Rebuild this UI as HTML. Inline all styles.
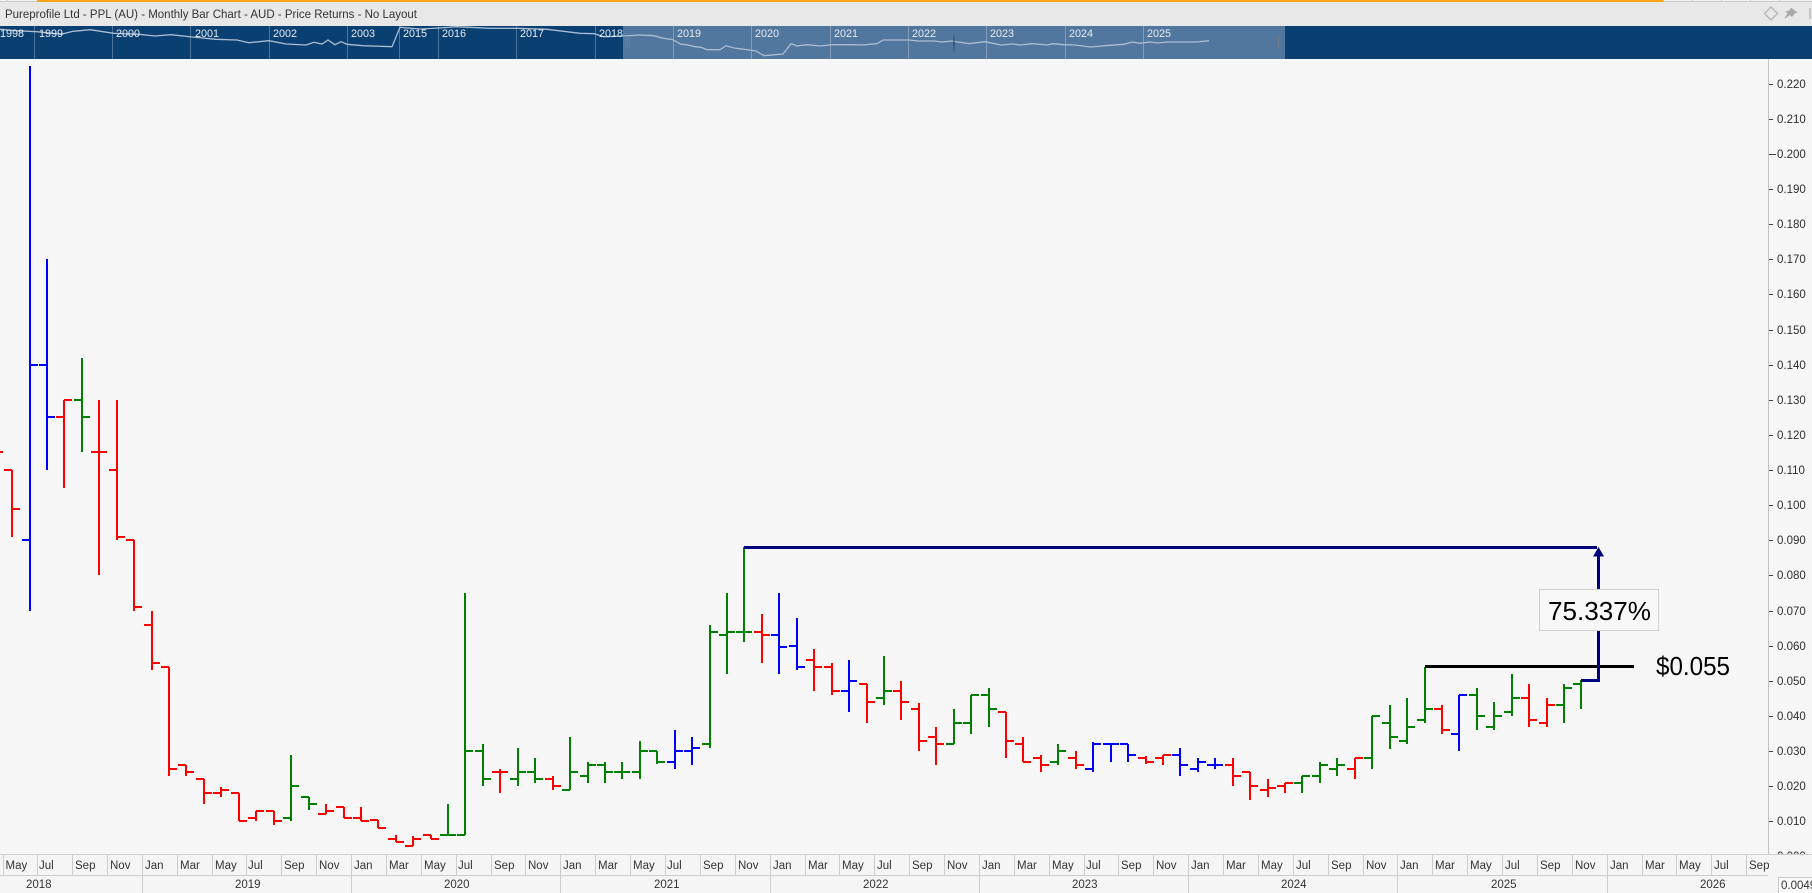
<!DOCTYPE html>
<html lang="en"><head><meta charset="utf-8"><title>Pureprofile Ltd - PPL (AU) - Monthly Bar Chart</title>
<style>
html,body{margin:0;padding:0;background:#f7f7f7;overflow:hidden;width:1812px;height:893px}
svg{display:block;font-family:"Liberation Sans","DejaVu Sans",sans-serif}
.m text{font-size:11.5px;fill:#333}
.t text{font-size:11.5px;fill:#2e2e2e}
.b text{font-size:10.8px;fill:#e6ecf3}
</style></head><body>
<svg xmlns="http://www.w3.org/2000/svg" width="1812" height="893" viewBox="0 0 1812 893">
<defs>
<clipPath id="axc"><rect x="1769" y="59" width="43" height="795"/></clipPath>
<linearGradient id="hg" x1="0" y1="0" x2="0" y2="1"><stop offset="0" stop-color="#1a3a5c" stop-opacity="0"/><stop offset=".5" stop-color="#12304f"/><stop offset="1" stop-color="#1a3a5c" stop-opacity="0"/></linearGradient>
</defs>
<rect width="1812" height="893" fill="#f7f7f7"/>
<!-- top bar -->
<rect width="1812" height="26" fill="#e8e8e8"/>
<rect width="1812" height="2" fill="#f4f4f4"/>
<path d="M0 1.5H1812M7 0V2M1692.5 0V2M1721.5 0V2M1750.5 0V2M1779.5 0V2" stroke="#c8c8c8" stroke-width="1" fill="none"/>
<rect x="37" y="0" width="1626.5" height="2" fill="#f9a61a"/>
<text x="5" y="18" font-size="12.4" fill="#333" textLength="412" lengthAdjust="spacingAndGlyphs">Pureprofile Ltd - PPL (AU) - Monthly Bar Chart - AUD - Price Returns - No Layout</text>
<path d="M1771 7L1777.5 13.5L1771 20L1764.5 13.5Z" fill="none" stroke="#b9b9b9" stroke-width="1.5"/>
<path d="M1791 7.5L1797.5 12.5L1794.5 13.5L1792 17L1789.5 15L1785.5 18.5L1784.5 18L1787.5 13.5L1785.5 11.5L1789.5 10.5Z" fill="#a9a9a9"/>
<path d="M1810 8V19" stroke="#c6c6c6" stroke-width="2"/>
<!-- navigator band -->
<rect x="0" y="26" width="1812" height="33" fill="#0a3f72"/>
<rect x="623" y="26" width="662" height="33" fill="#52779f"/>
<path d="M34.5 26V59M112.5 26V59M190.5 26V59M269.5 26V59M347.5 26V59M399.5 26V59M438.5 26V59M516.5 26V59M595.5 26V59M673.5 26V59M751.5 26V59M830.5 26V59M908.5 26V59M986.5 26V59M1065.5 26V59M1143.5 26V59" stroke="#fff" stroke-opacity=".28" stroke-width="1" fill="none"/>
<path d="M0 29.3L16 30.7L37 31.7L61 34.3L73 31.3L90 29.7L114 33.3L139 34.3L155 36L171 34.7L192 37L216 39.3L237 40L249 42.7L269 40.7L286 44L306 45L314 42.3L322 44L328 40L335 44.7L341 41.7L347 44.3L363 45.7L392 46.7L400 27.3L420 29L439 28L457 26.7L490 28.3L518 28.3L547 29.3L580 33.3L594 33.7L604 36.7L623 36L640 35L654 35.7L662 38L673 39.7L681 44.3L687 44.7L695 46.7L701 47.3L707 49.7L720 49.7L726 45.7L734 48L750 50L756 51L764 55.7L783 54L791 43.7L797 46L807 44.7L820 46L832 44.7L852 44.7L862 45L877 43.7L883 40L909 40L918 41L934 41L942 42L952 41L969 43.7L985 41.7L1001 45L1013 44L1020 45L1032 43.7L1048 45L1052 43.7L1064 44.7L1075 45L1091 47L1105 45.7L1124 44.3L1132 42L1140 43.3L1150 42L1158 43L1167 42L1197 42L1209 40.7" fill="none" stroke="#a9bdd2" stroke-width="1.3"/>
<g class="b">
<text x="0" y="37">1998</text><text x="39" y="37">1999</text><text x="116" y="37">2000</text><text x="195" y="37">2001</text><text x="273" y="37">2002</text><text x="351" y="37">2003</text><text x="403" y="37">2015</text><text x="442" y="37">2016</text><text x="520" y="37">2017</text><text x="599" y="37">2018</text><text x="677" y="37">2019</text><text x="755" y="37">2020</text><text x="834" y="37">2021</text><text x="912" y="37">2022</text><text x="990" y="37">2023</text><text x="1069" y="37">2024</text><text x="1147" y="37">2025</text>
</g>
<path d="M625.5 36V48M627.5 36V48M629.5 36V48M1278.5 36V48" stroke="#6d7e90" stroke-width="1"/>
<rect x="953.5" y="31" width="1" height="24" fill="url(#hg)"/>
<!-- bars -->
<g fill="none" stroke-width="2" shape-rendering="crispEdges">
<path stroke="#ff0000" d="M-13 452H3M12 470V537M4 470H12M12 509H20M64 400V488M56 417H64M64 400H72M99 400V575M91 452H107M117 400V540M109 470H117M117 537H125M134 540V611M126 540H134M134 607H142M152 611V670M144 625H152M152 663H160M169 667V776M161 667H169M169 769H177M186 765V776M178 765H186M186 772H194M204 779V804M196 779H204M204 793H212M221 787V797M213 793H221M221 790H229M239 793V821M231 793H239M239 821H247M256 811V821M248 818H256M256 811H264M274 811V825M266 811H274M274 821H282M326 804V814M318 814H326M326 811H334M344 807V818M336 807H344M344 818H352M361 807V821M353 818H361M361 821H369M378 820V828M370 820H378M378 828H386M396 835V842M388 839H396M396 842H404M413 836V846M405 846H413M413 839H421M431 835V839M423 835H431M431 839H439M500 769V793M492 772H508M553 776V790M545 779H553M553 786H561M762 614V663M754 632H762M762 635H770M814 649V691M806 660H814M814 667H822M832 663V695M824 667H832M832 691H840M867 684V723M859 684H867M867 702H875M901 681V720M893 691H901M901 702H909M919 703V751M911 709H919M919 741H927M936 727V765M928 737H936M936 744H944M1006 712V758M998 712H1006M1006 741H1014M1023 737V762M1015 744H1023M1023 762H1031M1041 755V772M1033 758H1041M1041 765H1049M1076 751V769M1068 758H1076M1076 765H1084M1146 756V764M1138 758H1146M1146 762H1154M1163 755V765M1155 758H1163M1163 755H1171M1233 758V786M1225 765H1233M1233 776H1241M1250 772V800M1242 772H1250M1250 786H1258M1268 779V797M1260 790H1268M1268 788H1276M1285 783V793M1277 786H1285M1285 783H1293M1355 758V779M1347 769H1355M1355 758H1363M1442 705V734M1434 709H1442M1442 730H1450M1529 684V727M1521 698H1529M1529 720H1537M1547 698V727M1539 723H1547M1547 705H1555"/>
<path stroke="#0000ff" d="M30 66V611M22 540H30M30 365H38M47 259V470M39 365H47M47 417H55M675 730V769M667 762H675M675 751H683M692 737V765M684 751H692M692 748H700M779 593V674M771 635H779M779 647H787M797 618V670M789 646H797M797 667H805M849 660V712M841 691H849M849 681H857M1093 742V772M1085 769H1093M1093 744H1101M1111 744V762M1103 744H1119M1128 744V762M1120 744H1128M1128 755H1136M1180 748V776M1172 755H1180M1180 765H1188M1198 758V772M1190 769H1198M1198 762H1206M1215 758V769M1207 765H1223M1459 695V751M1451 734H1459M1459 695H1467"/>
<path stroke="#008000" d="M82 358V452M74 400H82M82 417H90M291 755V821M283 818H291M291 786H299M309 797V810M301 797H309M309 804H317M448 804V835M440 835H456M465 593V835M457 835H465M465 751H473M483 744V786M475 751H483M483 779H491M518 748V786M510 779H518M518 772H526M535 758V783M527 772H535M535 779H543M570 737V790M562 790H570M570 772H578M588 762V783M580 776H588M588 765H596M605 762V783M597 765H605M605 772H613M622 762V779M614 772H630M640 741V779M632 772H640M640 751H648M657 751V764M649 751H657M657 762H665M710 625V748M702 744H710M710 632H718M727 593V674M719 635H727M727 632H735M744 547V642M736 632H752M884 656V705M876 698H884M884 691H892M954 709V744M946 744H954M954 723H962M971 695V734M963 723H971M971 695H979M989 688V727M981 695H989M989 709H997M1058 744V765M1050 762H1058M1058 751H1066M1302 776V793M1294 783H1302M1302 776H1310M1320 762V783M1312 776H1320M1320 765H1328M1337 758V776M1329 769H1337M1337 765H1345M1372 716V769M1364 758H1372M1372 716H1380M1390 705V749M1382 723H1390M1390 737H1398M1407 698V744M1399 741H1407M1407 727H1415M1425 667V723M1417 720H1425M1425 709H1433M1477 688V730M1469 695H1477M1477 716H1485M1494 702V730M1486 727H1494M1494 716H1502M1512 674V716M1504 712H1512M1512 698H1520M1564 684V723M1556 705H1564M1564 688H1572M1581 680V709M1573 684H1581"/>
</g>
<!-- annotations -->
<g shape-rendering="crispEdges" fill="none">
<path d="M1425 666.5H1634" stroke="#000" stroke-width="3"/>
<path d="M744 547.5H1597" stroke="#00007f" stroke-width="3"/>
<path d="M1581 680.5H1600M1598.5 682V552" stroke="#00007f" stroke-width="3"/>
</g>
<path d="M1598.5 547L1604 556.5H1593Z" fill="#00007f"/>
<rect x="1539.5" y="589.5" width="119" height="41" fill="#f8f8f8" stroke="#cfcfcf" stroke-width="1"/>
<text x="1548" y="620" font-size="26.2" fill="#000" textLength="103" lengthAdjust="spacingAndGlyphs">75.337%</text>
<text x="1656" y="675" font-size="26.2" fill="#000" textLength="74" lengthAdjust="spacingAndGlyphs">$0.055</text>
<!-- x axis -->
<rect x="0" y="854" width="1812" height="39" fill="#f5f5f5"/>
<path d="M0 854.5H1812M0 875.5H1768M3.5 855V875M37.5 855V875M72.5 855V875M107.5 855V875M142.5 855V875M177.5 855V875M212.5 855V875M246.5 855V875M281.5 855V875M316.5 855V875M351.5 855V875M386.5 855V875M421.5 855V875M456.5 855V875M491.5 855V875M525.5 855V875M560.5 855V875M595.5 855V875M630.5 855V875M665.5 855V875M700.5 855V875M735.5 855V875M770.5 855V875M805.5 855V875M839.5 855V875M874.5 855V875M909.5 855V875M944.5 855V875M979.5 855V875M1014.5 855V875M1049.5 855V875M1084.5 855V875M1118.5 855V875M1153.5 855V875M1188.5 855V875M1223.5 855V875M1258.5 855V875M1293.5 855V875M1328.5 855V875M1363.5 855V875M1397.5 855V875M1432.5 855V875M1467.5 855V875M1502.5 855V875M1537.5 855V875M1572.5 855V875M1607.5 855V875M1642.5 855V875M1676.5 855V875M1711.5 855V875M1746.5 855V875M142.5 876V893M351.5 876V893M560.5 876V893M770.5 876V893M979.5 876V893M1188.5 876V893M1397.5 876V893M1607.5 876V893" stroke="#cdcdcd" stroke-width="1" fill="none"/>
<g class="m">
<text x="5.5" y="869">May</text><text x="39" y="869">Jul</text><text x="75" y="869">Sep</text><text x="110" y="869">Nov</text><text x="145" y="869">Jan</text><text x="180" y="869">Mar</text><text x="215" y="869">May</text><text x="248" y="869">Jul</text><text x="284" y="869">Sep</text><text x="319" y="869">Nov</text><text x="354" y="869">Jan</text><text x="389" y="869">Mar</text><text x="424" y="869">May</text><text x="458" y="869">Jul</text><text x="494" y="869">Sep</text><text x="528" y="869">Nov</text><text x="563" y="869">Jan</text><text x="598" y="869">Mar</text><text x="633" y="869">May</text><text x="667" y="869">Jul</text><text x="703" y="869">Sep</text><text x="738" y="869">Nov</text><text x="773" y="869">Jan</text><text x="808" y="869">Mar</text><text x="842" y="869">May</text><text x="877" y="869">Jul</text><text x="912" y="869">Sep</text><text x="947" y="869">Nov</text><text x="982" y="869">Jan</text><text x="1017" y="869">Mar</text><text x="1052" y="869">May</text><text x="1086" y="869">Jul</text><text x="1121" y="869">Sep</text><text x="1156" y="869">Nov</text><text x="1191" y="869">Jan</text><text x="1226" y="869">Mar</text><text x="1261" y="869">May</text><text x="1296" y="869">Jul</text><text x="1331" y="869">Sep</text><text x="1366" y="869">Nov</text><text x="1400" y="869">Jan</text><text x="1435" y="869">Mar</text><text x="1470" y="869">May</text><text x="1505" y="869">Jul</text><text x="1540" y="869">Sep</text><text x="1575" y="869">Nov</text><text x="1610" y="869">Jan</text><text x="1645" y="869">Mar</text><text x="1679" y="869">May</text><text x="1714" y="869">Jul</text><text x="1749" y="869">Sep</text>
<text x="26" y="888">2018</text><text x="235" y="888">2019</text><text x="444" y="888">2020</text><text x="654" y="888">2021</text><text x="863" y="888">2022</text><text x="1072" y="888">2023</text><text x="1281" y="888">2024</text><text x="1491" y="888">2025</text><text x="1700" y="888">2026</text>
</g>
<rect x="1778.5" y="877.5" width="40" height="20" fill="#fbfbfb" stroke="#c8c8c8" stroke-width="1"/>
<text x="1781" y="889" font-size="11.5" fill="#333">0.0049</text>
<!-- y axis -->
<rect x="1768" y="59" width="1" height="795" fill="#c4c4c4"/>
<path d="M1769 84.5H1773M1769 119.5H1773M1769 154.5H1776M1769 189.5H1773M1769 224.5H1773M1769 259.5H1773M1769 294.5H1773M1769 330.5H1773M1769 365.5H1773M1769 400.5H1773M1769 435.5H1773M1769 470.5H1773M1769 505.5H1773M1769 540.5H1773M1769 575.5H1773M1769 611.5H1773M1769 646.5H1773M1769 681.5H1773M1769 716.5H1773M1769 751.5H1773M1769 786.5H1773M1769 821.5H1773" stroke="#444" stroke-width="1" fill="none"/>
<g class="t">
<text x="1777" y="88">0.220</text><text x="1777" y="123">0.210</text><text x="1777" y="158">0.200</text><text x="1777" y="193">0.190</text><text x="1777" y="228">0.180</text><text x="1777" y="263">0.170</text><text x="1777" y="298">0.160</text><text x="1777" y="334">0.150</text><text x="1777" y="369">0.140</text><text x="1777" y="404">0.130</text><text x="1777" y="439">0.120</text><text x="1777" y="474">0.110</text><text x="1777" y="509">0.100</text><text x="1777" y="544">0.090</text><text x="1777" y="579">0.080</text><text x="1777" y="615">0.070</text><text x="1777" y="650">0.060</text><text x="1777" y="685">0.050</text><text x="1777" y="720">0.040</text><text x="1777" y="755">0.030</text><text x="1777" y="790">0.020</text><text x="1777" y="825">0.010</text>
<text x="1777" y="860" clip-path="url(#axc)">0.000</text>
</g>
</svg>
</body></html>
